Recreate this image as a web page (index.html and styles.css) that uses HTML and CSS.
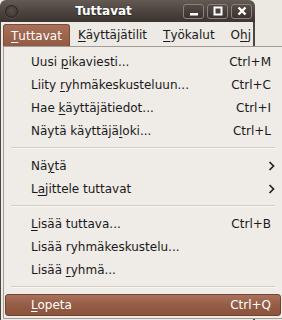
FILE: index.html
```html
<!DOCTYPE html>
<html lang="fi">
<head>
  <meta charset="UTF-8">
  <title>Tuttavat</title>
  <link rel="stylesheet" href="styles.css">
</head>
<body>
  <div class="window">
    <div class="titlebar">
      <span class="title-icon"></span>
      <span class="title">Tuttavat</span>
      <div class="title-buttons">
        <span class="tbtn"><svg width="10" height="10" viewBox="0 0 10 10"><rect x="1" y="7" width="8" height="2.5" fill="#fff"/></svg></span>
        <span class="tbtn"><svg width="10" height="10" viewBox="0 0 10 10"><rect x="1.5" y="1.5" width="7" height="7" fill="none" stroke="#fff" stroke-width="2"/></svg></span>
        <span class="tbtn"><svg width="10" height="10" viewBox="0 0 10 10"><path d="M1.5 1.5 L8.5 8.5 M8.5 1.5 L1.5 8.5" stroke="#fff" stroke-width="2.4"/></svg></span>
      </div>
    </div>
    <div class="menubar">
      <span class="mb-item active"><u>T</u>uttavat</span>
      <span class="mb-item"><u>K</u>äyttäjätilit</span>
      <span class="mb-item"><u>T</u>yökalut</span>
      <span class="mb-item last">O<u>h</u>j</span>
    </div>
    <div class="content"></div>
  </div>

  <div class="menu">
    <div class="item"><span>Uusi <u>p</u>ikaviesti...</span><span class="key">Ctrl+M</span></div>
    <div class="item"><span>Liity <u>r</u>yhmäkeskusteluun...</span><span class="key">Ctrl+C</span></div>
    <div class="item"><span>Hae <u>k</u>äyttäjätiedot...</span><span class="key">Ctrl+I</span></div>
    <div class="item"><span>Näytä käyttäjä<u>l</u>oki...</span><span class="key">Ctrl+L</span></div>
    <div class="sep"></div>
    <div class="item"><span>Nä<u>y</u>tä</span><svg class="arrow" width="7" height="10" viewBox="0 0 7 10"><path d="M1.5 1 L5.5 5 L1.5 9" fill="none" stroke="#222" stroke-width="1.7"/></svg></div>
    <div class="item"><span>L<u>a</u>jittele tuttavat</span><svg class="arrow" width="7" height="10" viewBox="0 0 7 10"><path d="M1.5 1 L5.5 5 L1.5 9" fill="none" stroke="#222" stroke-width="1.7"/></svg></div>
    <div class="sep"></div>
    <div class="item"><span><u>L</u>isää tuttava...</span><span class="key">Ctrl+B</span></div>
    <div class="item"><span>Lisää ryhmäkeskustelu...</span></div>
    <div class="item"><span>Lisää <u>r</u>yhmä...</span></div>
    <div class="sep"></div>
    <div class="item selected"><span><u>L</u>opeta</span><span class="key">Ctrl+Q</span></div>
  </div>
</body>
</html>
```

FILE: styles.css
```css
body {
  margin: 0;
  width: 282px;
  height: 320px;
  overflow: hidden;
  position: relative;
  background-color: #ece8e2;
  font-family: "DejaVu Sans", sans-serif;
  font-size: 12px;
  color: #1a1a1a;
}
u { text-decoration: underline; text-underline-offset: 2px; text-decoration-thickness: 1px; }

.window {
  width: 255px;
  height: 320px;
  background-color: #efebe7;
  border-radius: 6px 6px 0 0;
}
.titlebar {
  height: 22px;
  box-sizing: border-box;
  display: flex;
  align-items: center;
  padding: 0 3px 0 5px;
  background: linear-gradient(#645a54, #4a413c 60%, #3c3430);
  border-radius: 6px 6px 0 0;
}
.title-icon {
  width: 11px;
  height: 11px;
  border-radius: 50%;
  border: 1px solid #2a2320;
  background: radial-gradient(circle at 50% 40%, #5a504a, #3a322e);
  box-shadow: 0 1px 0 rgba(255, 255, 255, 0.12);
}
.title {
  flex: 1;
  text-align: center;
  color: #fff;
  font-weight: bold;
  padding-left: 6px;
  text-shadow: 0 1px 1px rgba(0, 0, 0, 0.4);
}
.title-buttons { display: flex; gap: 3px; }
.tbtn {
  width: 21px;
  height: 15px;
  box-sizing: border-box;
  border: 1px solid #8b817a;
  border-radius: 3px;
  background: linear-gradient(#554b46, #3b332f);
  display: flex;
  align-items: center;
  justify-content: center;
}

.menubar {
  height: 24px;
  box-sizing: border-box;
  display: flex;
  align-items: flex-end;
  padding-left: 2px;
  border-left: 1px solid #4d4540;
  border-right: 2px solid #4d4540;
  background-color: #ede9e4;
  white-space: nowrap;
  overflow: hidden;
}
.mb-item {
  height: 22px;
  box-sizing: border-box;
  padding: 0 8px;
  display: flex;
  align-items: center;
}
.mb-item.last { padding-right: 0; }
.mb-item.active {
  color: #fff;
  background: linear-gradient(#a8705a, #935a43);
  border: 1px solid #7a4a36;
  border-bottom: none;
  border-radius: 3px 3px 0 0;
  padding: 0 7px;
}
.content {
  height: 274px;
  border-left: 1px solid #4d4540;
  border-right: 2px solid #4d4540;
  background-color: #efebe7;
}

.menu {
  position: absolute;
  left: 3px;
  top: 46px;
  width: 276px;
  padding: 3px 1px 2px;
  border: 1px solid #a39c94;
  background-color: #efebe7;
}
.item {
  height: 23px;
  box-sizing: border-box;
  display: flex;
  align-items: center;
  justify-content: space-between;
  padding: 0 10px 0 26px;
  white-space: nowrap;
}
.arrow { margin-right: -4px; }
.item.selected {
  height: 22px;
  margin-top: 1px;
  color: #fff;
  background: linear-gradient(#a9725c, #955c45 50%, #8c533d);
  border: 1px solid #6f4332;
  border-radius: 3px;
  padding: 0 9px 0 25px;
}
.sep {
  height: 12px;
  box-sizing: border-box;
  margin: 0 6px;
  padding-top: 5px;
}
.sep::before {
  content: "";
  display: block;
  height: 1px;
  background-color: #d5cdc4;
  border-bottom: 1px solid #f8f6f3;
}
```
